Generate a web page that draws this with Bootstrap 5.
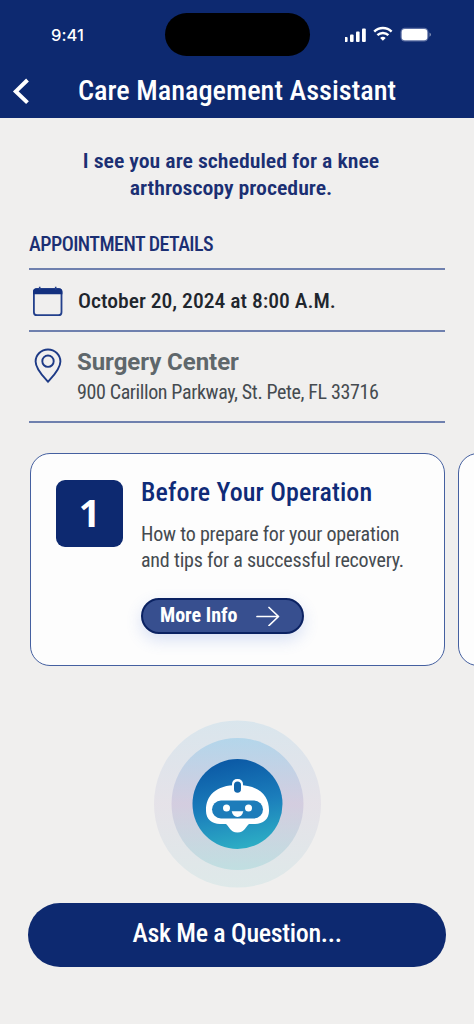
<!DOCTYPE html>
<html lang="en">
<head>
<meta charset="utf-8">
<meta name="viewport" content="width=device-width, initial-scale=1">
<title>Care Management Assistant</title>
<link href="https://cdn.jsdelivr.net/npm/bootstrap@5.3.0/dist/css/bootstrap.min.css" rel="stylesheet">
<style>
:root{--navy:#0d2970;--rule:#6f80ae}
body{font-family:Roboto,"Liberation Sans",sans-serif;font-stretch:75%;background:#f0efee;color:#1f262d;width:100%;height:1024px;overflow:hidden}
.app-header{background:var(--navy);height:118px}
.status-row{height:73px;padding:13px 43px 0 51px}
.clock{font:500 16.5px/43px Inter,sans-serif;width:114px;letter-spacing:.1px;padding-top:1px}
.island{width:145px;height:43px;background:#000}
.status-icons{width:86px;height:43px}
.title-row{height:45px;padding-left:12px}
.title-row h1{font-size:27px;line-height:36px;font-weight:500;transform:scaleX(1.049);transform-origin:left;margin-left:48px}
.content{padding:30px 29px 0}
.intro{font-size:21px;line-height:26.5px;font-weight:600;transform:scaleX(1.038);color:#1b2f73;margin-right:12px}
.section-title{font-size:20px;line-height:24px;font-weight:500;letter-spacing:-.53px;color:#1b2f73;margin:31px 0 12px}
.detail-row{border-top:2px solid var(--rule)}
.detail-date{height:62px}
.detail-place{height:93px;border-bottom:2px solid var(--rule)}
.date-text{font-size:21px;line-height:26px;font-weight:500;transform:scaleX(1.028);transform-origin:left}
.place-name{font-size:24px;line-height:31px;font-weight:700;font-stretch:100%;color:#5f676b;letter-spacing:-.05px}
.place-address{font-size:20px;line-height:28px;letter-spacing:-.38px;color:#454b50}
.steps{margin:30px -29px 0 1px;gap:13px;overflow:hidden}
.step-card{flex:0 0 415px;height:213px;background:#fdfdfd;border:1.5px solid #4560a0;border-radius:20px;padding:26px 25px}
.step-number{width:67px;height:67px;border-radius:9px;background:var(--navy);font:700 38px/64px "Open Sans",sans-serif;flex:none}
.step-title{font-size:26px;line-height:32px;font-weight:500;letter-spacing:.14px;color:#0f2b78;margin:-4px 0 14px}
.step-text{font-size:20px;line-height:25.6px;letter-spacing:-.21px;color:#454b50;white-space:nowrap}
.more-btn{width:163px;height:36px;margin-top:25px;background:#374f8f;border:2px solid #0b2262;font-size:20px;font-weight:700;line-height:30px;padding:0 22px 0 17px;box-shadow:0 6px 16px rgba(70,110,210,.2)}
.assistant{margin-top:54px;line-height:0;margin-right:-1px}
.ask-btn{height:64px;margin:15px 0 0 -1px;width:418px;background:var(--navy);font-size:26px;line-height:61px;font-weight:500;padding:0;border:0;letter-spacing:-.32px}
</style>
</head>
<body>
<header class="app-header text-white">
  <div class="status-row d-flex align-items-start">
    <div class="clock">9:41</div>
    <div class="island rounded-pill"></div>
    <svg class="status-icons ms-auto" viewBox="0 0 86 43" fill="#fff">
      <g transform="translate(-1 0)"><rect x="0" y="24" width="3.6" height="5" rx="1"/><rect x="6" y="21.6" width="3.600" height="7.400" rx="1"/><rect x="12" y="18.400" width="3.600" height="10.600" rx="1"/><rect x="18" y="15.500" width="3.800" height="13.500" rx="1"/></g>
      <g transform="translate(-1 -.6)"><g fill="none" stroke="#fff" stroke-width="2.500"><path d="M30.200 19.200a12.600 12.600 0 0 1 17.400 0"/><path d="M33.400 22.800a8 8 0 0 1 11 0"/></g>
      <path d="M36.100 25.600a4 4 0 0 1 5.600 0L38.900 28.400z"/></g>
      <rect x="55.500" y="14.800" width="28" height="13.600" rx="4.300" fill="#8f9cc4" opacity=".6"/>
      <rect x="56.700" y="16" width="25.600" height="11.200" rx="3.200"/>
      <path d="M84.500 19.400c1.900.9 1.900 3.500 0 4.400z" opacity=".5"/>
    </svg>
  </div>
  <div class="title-row d-flex align-items-start">
    <svg width="18" height="27" viewBox="0 0 18 27" style="margin-top:5px" fill="none" stroke="#fff" stroke-width="4"><path d="M15.500 2 3.800 13.400 15.500 24.600"/></svg>
    <h1 class="mb-0">Care Management Assistant</h1>
  </div>
</header>

<main class="content">
  <p class="intro text-center mb-0">I see you are scheduled for a knee<br>arthroscopy procedure.</p>

  <h2 class="section-title">APPOINTMENT DETAILS</h2>
  <div class="detail-row detail-date d-flex">
    <svg class="flex-shrink-0" width="49" height="60" viewBox="0 0 49 60"><rect x="4.900" y="19.200" width="27.600" height="26" rx="3" fill="none" stroke="#23408c" stroke-width="1.800"/><path d="M4 24.200V21.800q0-3.600 3.600-3.600h22.200q3.600 0 3.600 3.600v2.400z" fill="#13307f"/><path d="M10.700 16.800v3M26.700 16.800v3" stroke="#23408c" stroke-width="1.600"/></svg>
    <div class="date-text" style="margin-top:18px">October 20, 2024 at 8:00 A.M.</div>
  </div>
  <div class="detail-row detail-place d-flex">
    <svg class="flex-shrink-0" width="48" height="60" viewBox="0 0 48 60" fill="none" stroke="#1d3a86" stroke-width="1.900"><path d="M19 49.700C15.500 45.600 6.600 37.500 6.600 29.500a12.400 12 0 0 1 24.800 0c0 8-8.900 16.100-12.400 20.200z"/><circle cx="19" cy="29.200" r="5.700"/></svg>
    <div style="padding-top:15px">
      <div class="place-name">Surgery Center</div>
      <div class="place-address">900 Carillon Parkway, St. Pete, FL 33716</div>
    </div>
  </div>

  <section class="steps d-flex">
    <article class="step-card d-flex align-items-start">
      <div class="step-number text-white text-center">1</div>
      <div style="margin-left:18px">
        <h3 class="step-title">Before Your Operation</h3>
        <p class="step-text mb-0">How to prepare for your operation<br>and tips for a successful recovery.</p>
        <a class="more-btn btn btn-primary rounded-pill d-flex justify-content-between align-items-center" href="#"><span style="margin-top:-3px">More Info</span>
          <svg width="24" height="20" viewBox="0 0 24 20" fill="none" stroke="#fff" stroke-width="1.700" stroke-linecap="round" stroke-linejoin="round"><path d="M1 10.500h21M13 1.500l9.500 9-9.500 9"/></svg></a>
      </div>
    </article>
    <article class="step-card"></article>
  </section>

  <div class="assistant text-center">
    <svg width="168" height="168" viewBox="-83.500 -84 168 168">
      <defs>
        <linearGradient id="ring" x1="0" y1="0" x2="0" y2="1"><stop offset="0" stop-color="#a4d0ea"/><stop offset=".5" stop-color="#cdc5dc"/><stop offset="1" stop-color="#b4dbde"/></linearGradient>
        <linearGradient id="core" x1=".4" y1="0" x2=".6" y2="1"><stop offset="0" stop-color="#0b59a5"/><stop offset=".5" stop-color="#1b7dbb"/><stop offset="1" stop-color="#2dafc5"/></linearGradient>
      </defs>
      <circle r="83.500" fill="url(#ring)" opacity=".3"/>
      <circle r="66" fill="url(#ring)" opacity=".72"/>
      <circle r="45" fill="url(#core)"/>
      <g transform="translate(0 1)">
      <path fill="#fff" d="M-31.500 5C-31.500-9-22-20 0-20S31.500-9 31.500 5v1c0 8-6 13-14 13H11.500C8.500 21 7.500 27.500 0 27.500S-8.500 21-11.500 19H-17.500c-8 0-14-5-14-13z"/>
      <rect x="-5.500" y="-26" width="11" height="15" rx="5" fill="#fff"/>
      <path fill="#1266ab" d="M-3.500-20q0-3.600 3.500-3.600t3.500 3.600v4q0 3.800-3.500 3.800t-3.500-3.800z"/>
      <rect x="-25.500" y="-4.500" width="51" height="18" rx="9" fill="#1c7cba"/>
      <circle cx="-11" cy="3" r="3.500" fill="#fff"/><circle cx="11" cy="3" r="3.500" fill="#fff"/>
      <path fill="#fff" d="M-5.800 6.300H5.800C5 10 3 12 0 12S-5 10-5.800 6.300z"/></g>
    </svg>
  </div>

  <a class="ask-btn btn btn-primary rounded-pill d-block" href="#">Ask Me a Question...</a>
</main>
<script src="https://cdn.jsdelivr.net/npm/bootstrap@5.3.0/dist/js/bootstrap.bundle.min.js"></script>
</body>
</html>
